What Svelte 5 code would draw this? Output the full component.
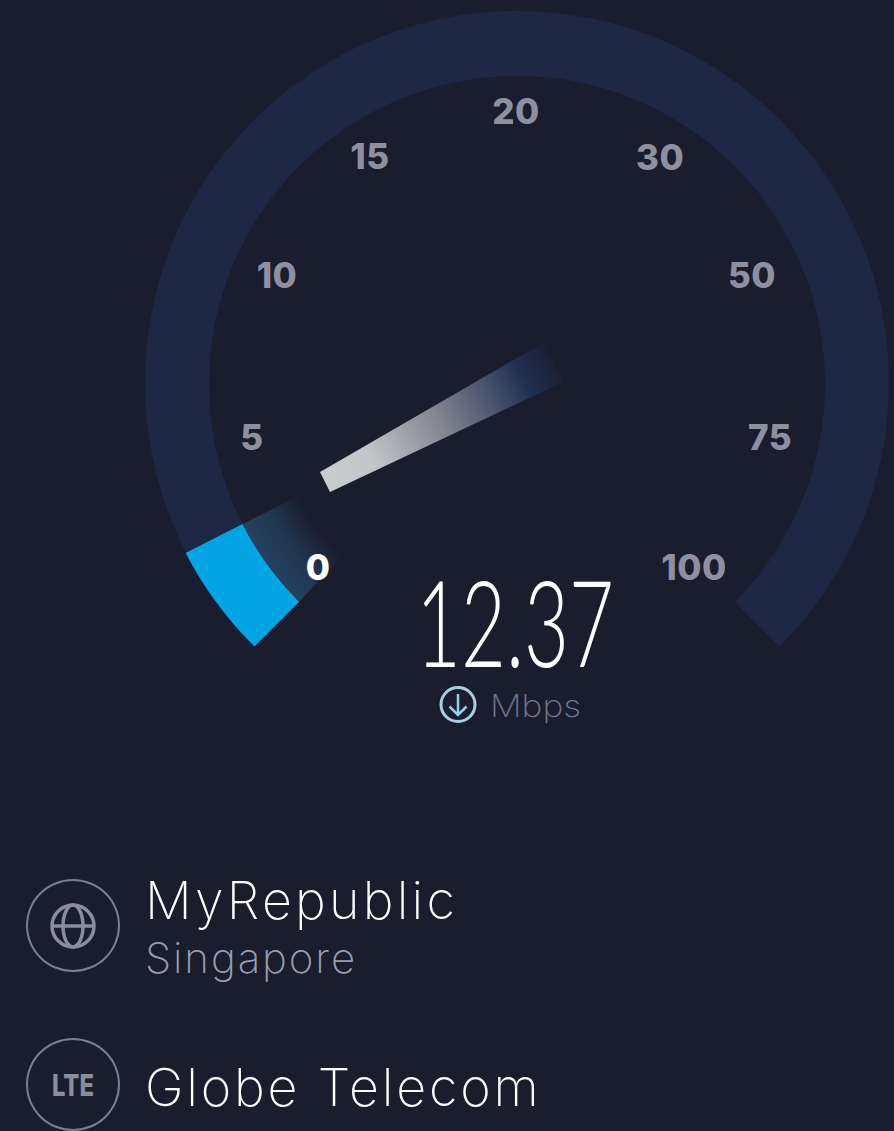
<script>
  const ticks = [
    { label: '0', x: 318, y: 580, cls: 'tick zero' },
    { label: '5', x: 252, y: 450, cls: 'tick' },
    { label: '10', x: 277, y: 288, cls: 'tick' },
    { label: '15', x: 370, y: 169, cls: 'tick' },
    { label: '20', x: 516, y: 124, cls: 'tick' },
    { label: '30', x: 660, y: 170, cls: 'tick' },
    { label: '50', x: 752, y: 288, cls: 'tick' },
    { label: '75', x: 770, y: 450, cls: 'tick' },
    { label: '100', x: 694, y: 580, cls: 'tick' }
  ];
</script>

<main class="page">
  <svg class="gauge" width="894" height="860" viewBox="0 0 894 860">
    <defs>
      <radialGradient id="glow" gradientUnits="userSpaceOnUse" cx="517" cy="384" r="308">
        <stop offset="0.8" stop-color="#24415f" stop-opacity="0" />
        <stop offset="0.9" stop-color="#24415f" stop-opacity="0.7" />
        <stop offset="1" stop-color="#24415f" stop-opacity="1" />
      </radialGradient>
      <linearGradient id="needle" gradientUnits="userSpaceOnUse" x1="325" y1="482" x2="553" y2="362">
        <stop offset="0" stop-color="#c9cdd0" />
        <stop offset="0.2" stop-color="#c2c6c9" />
        <stop offset="0.5" stop-color="#84858f" />
        <stop offset="0.7" stop-color="#4e5871" />
        <stop offset="0.87" stop-color="#1f3050" />
        <stop offset="1" stop-color="#1b2035" />
      </linearGradient>
    </defs>
    <path class="track" d="M254.5 646.5 A372 372 0 1 1 779.5 646.5 L734.8 601.8 A308 308 0 1 0 299.2 601.8 Z" />
    <path class="fill" d="M185.6 553 A372 372 0 0 0 254.5 646.5 L299.2 601.8 A308 308 0 0 1 242.5 524 Z" />
    <path fill="url(#glow)" d="M242.5 524 A308 308 0 0 0 299.2 601.8 L341 557 A246 246 0 0 1 297 497 Z" />
    <polygon fill="url(#needle)" points="320,472 330,492 563,382 543,343" />
    {#each ticks as t}
      <text class={t.cls} x={t.x} y={t.y}>{t.label}</text>
    {/each}
    <text class="value" x="416" y="667" textLength="198" lengthAdjust="spacingAndGlyphs">12.37</text>
    <circle class="dl" cx="458" cy="704.5" r="17" />
    <path class="dl-arrow" d="M458 694 V715 M449.5 706.5 L458 715 L466.5 706.5" />
    <text class="unit" x="490" y="717" textLength="91" lengthAdjust="spacingAndGlyphs">Mbps</text>
  </svg>

  <section class="rows">
    <div class="row">
      <div class="badge">
        <svg width="48" height="48" viewBox="0 0 48 48">
          <circle cx="24" cy="24" r="21" />
          <ellipse cx="24" cy="24" rx="10" ry="21" />
          <path d="M3 24 H45" />
        </svg>
      </div>
      <div class="text">
        <div class="title first">MyRepublic</div>
        <div class="sub">Singapore</div>
      </div>
    </div>
    <div class="row">
      <div class="badge">
        <svg class="lte-icon" width="48" height="40" viewBox="0 0 48 40">
          <text x="3" y="31" textLength="42" lengthAdjust="spacingAndGlyphs">LTE</text>
        </svg>
      </div>
      <div class="text">
        <div class="title wide">Globe Telecom</div>
      </div>
    </div>
  </section>
</main>

<style>
  :global(body) {
    margin: 0;
    background: #1a1d2e;
  }
  .page {
    width: 894px;
    height: 1131px;
    overflow: hidden;
    background: #1a1d2e;
    font-family: "Inter", "Noto Sans", sans-serif;
  }
  .gauge {
    display: block;
  }
  .track {
    fill: #1e2743;
  }
  .fill {
    fill: #02a5e4;
  }
  .tick {
    font-family: "Inter", sans-serif;
    font-weight: 800;
    font-size: 35px;
    letter-spacing: 0.5px;
    fill: #8e8f9f;
    text-anchor: middle;
  }
  .zero {
    fill: #ffffff;
  }
  .value {
    font-family: "Lato", sans-serif;
    font-weight: 300;
    font-size: 121px;
    fill: #ffffff;
  }
  .unit {
    font-family: "Inter", sans-serif;
    font-weight: 200;
    font-size: 31px;
    fill: #6f768c;
  }
  .dl {
    fill: none;
    stroke: #a5cfe2;
    stroke-width: 3;
  }
  .dl-arrow {
    fill: none;
    stroke: #8fd0ea;
    stroke-width: 2.5;
  }
  .rows {
    display: flex;
    flex-direction: column;
    gap: 66px;
    padding: 19px 0 0 26px;
  }
  .row {
    display: flex;
    gap: 25px;
    height: 93px;
  }
  .badge {
    box-sizing: border-box;
    width: 94px;
    height: 93px;
    flex: none;
    border: 2px solid #7b7e90;
    border-radius: 50%;
    display: flex;
    align-items: center;
    justify-content: center;
  }
  .badge svg {
    fill: none;
    stroke: #8a8d9e;
    stroke-width: 3.5;
  }
  .badge .lte-icon text {
    font-family: "Inter", sans-serif;
    font-weight: 800;
    font-size: 30px;
    fill: #8a8d9e;
    stroke: none;
  }
  .text {
    display: flex;
    flex-direction: column;
  }
  .title {
    font-weight: 200;
    font-size: 52px;
    line-height: 46px;
    letter-spacing: 3.2px;
    color: #ffffff;
  }
  .first {
    margin-top: -1px;
  }
  .wide {
    margin-top: 27px;
    letter-spacing: 2.8px;
  }
  .sub {
    font-weight: 200;
    font-size: 42px;
    line-height: 68px;
    letter-spacing: 1.9px;
    color: #9a9db0;
  }
</style>
